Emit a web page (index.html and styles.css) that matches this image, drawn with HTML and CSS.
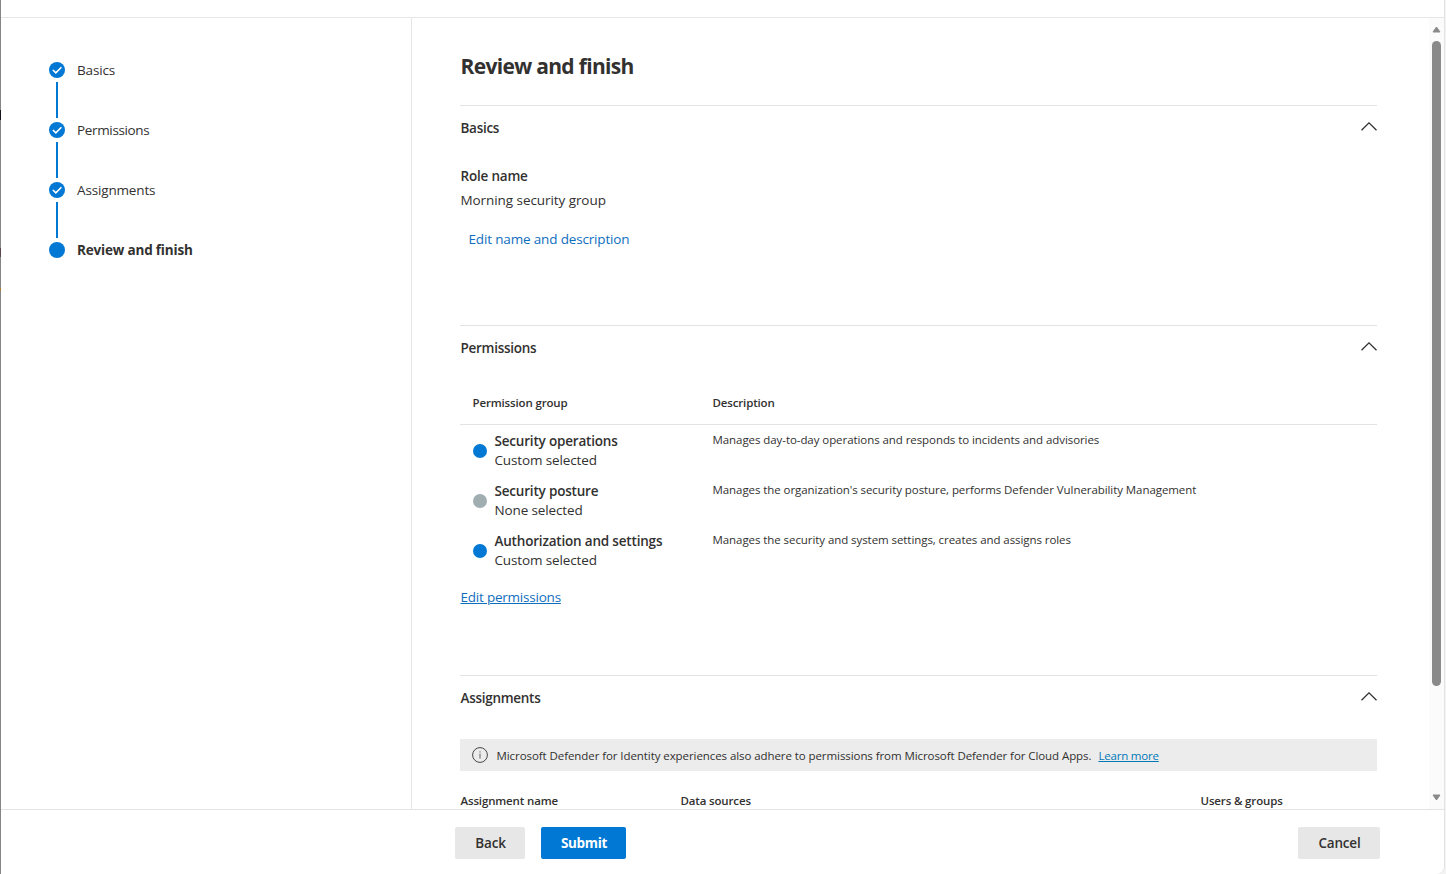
FILE: index.html
```html
<!DOCTYPE html>
<html lang="en">
<head>
<meta charset="utf-8">
<title>Review and finish</title>
<link rel="stylesheet" href="styles.css">
</head>
<body>
<div class="backdrop">
  <div class="edge"></div>
  <div class="panel">
    <header class="topbar"></header>
    <div class="body">
      <nav class="steps">
        <div class="step"><svg class="mark" viewBox="0 0 16 16"><circle cx="8" cy="8" r="8" fill="#0078d4"/><path d="M3.9 8 6.8 10.9 12.4 5.3" fill="none" stroke="#fff" stroke-width="1.6"/></svg><span>Basics</span></div>
        <div class="link-line"></div>
        <div class="step"><svg class="mark" viewBox="0 0 16 16"><circle cx="8" cy="8" r="8" fill="#0078d4"/><path d="M3.9 8 6.8 10.9 12.4 5.3" fill="none" stroke="#fff" stroke-width="1.6"/></svg><span class="narrow">Permissions</span></div>
        <div class="link-line"></div>
        <div class="step"><svg class="mark" viewBox="0 0 16 16"><circle cx="8" cy="8" r="8" fill="#0078d4"/><path d="M3.9 8 6.8 10.9 12.4 5.3" fill="none" stroke="#fff" stroke-width="1.6"/></svg><span>Assignments</span></div>
        <div class="link-line"></div>
        <div class="step current"><svg class="mark" viewBox="0 0 16 16"><circle cx="8" cy="8" r="8" fill="#0078d4"/></svg><span>Review and finish</span></div>
      </nav>
      <main class="content">
        <h1 class="title">Review and finish</h1>
        <section class="section basics">
          <div class="section-head"><h2>Basics</h2><svg class="chevron" viewBox="0 0 16 9"><path d="M.5 8.3 8 .9l7.5 7.4" fill="none" stroke="#323130" stroke-width="1.3"/></svg></div>
          <div class="field-label">Role name</div>
          <div class="field-value">Morning security group</div>
          <a class="action">Edit name and description</a>
        </section>
        <section class="section permissions">
          <div class="section-head"><h2>Permissions</h2><svg class="chevron" viewBox="0 0 16 9"><path d="M.5 8.3 8 .9l7.5 7.4" fill="none" stroke="#323130" stroke-width="1.3"/></svg></div>
          <div class="grid-head"><span>Permission group</span><span>Description</span></div>
          <div class="grid-row">
            <div class="group"><i class="dot"></i><div><b>Security operations</b><span>Custom selected</span></div></div>
            <p>Manages day-to-day operations and responds to incidents and advisories</p>
          </div>
          <div class="grid-row">
            <div class="group"><i class="dot none"></i><div><b>Security posture</b><span>None selected</span></div></div>
            <p>Manages the organization's security posture, performs Defender Vulnerability Management</p>
          </div>
          <div class="grid-row">
            <div class="group"><i class="dot"></i><div><b>Authorization and settings</b><span>Custom selected</span></div></div>
            <p>Manages the security and system settings, creates and assigns roles</p>
          </div>
          <a class="edit-link">Edit permissions</a>
        </section>
        <section class="section assignments">
          <div class="section-head"><h2>Assignments</h2><svg class="chevron" viewBox="0 0 16 9"><path d="M.5 8.3 8 .9l7.5 7.4" fill="none" stroke="#323130" stroke-width="1.3"/></svg></div>
          <div class="banner"><svg class="info" viewBox="0 0 16 16"><circle cx="8" cy="8" r="7.4" fill="none" stroke="#484644"/><path d="M8 6.6v5M8 4.3v1.2" stroke="#605e5c" fill="none"/></svg><span class="banner-text">Microsoft Defender for Identity experiences also adhere to permissions from Microsoft Defender for Cloud Apps.</span><a>Learn more</a></div>
          <div class="assign-head"><span>Assignment name</span><span>Data sources</span><span>Users &amp; groups</span></div>
        </section>
      </main>
      <div class="scrollbar">
        <svg class="arrow" viewBox="0 0 9 7"><path d="M4.5 1 8 6H1z" fill="#8a8a8a" stroke="#8a8a8a" stroke-linejoin="round"/></svg>
        <div class="thumb"></div>
        <svg class="arrow down" viewBox="0 0 9 7"><path d="M4.5 6 1 1h7z" fill="#8a8a8a" stroke="#8a8a8a" stroke-linejoin="round"/></svg>
      </div>
    </div>
    <footer class="footer">
      <button class="btn back">Back</button>
      <button class="btn primary">Submit</button>
      <button class="btn cancel">Cancel</button>
    </footer>
  </div>
</div>
</body>
</html>
```

FILE: styles.css
```css
* { box-sizing: border-box; }
body {
  margin: 0;
  overflow: hidden;
  color: #323130;
  font: 13.5px/20px "Open Sans", "Noto Sans", sans-serif;
}
.backdrop { display: flex; width: 1446px; height: 874px; background: #f3f3f3; }
.edge {
  width: 1px;
  background: linear-gradient(transparent 110px, #16141a 110px 120px, transparent 120px 248px, #5a4550 248px 257px, transparent 257px 288px, #b07a35 288px 291px, transparent 291px), #858585;
}
.panel {
  display: flex;
  flex-direction: column;
  width: 1444px;
  background: #fff;
  border-right: 1px solid #e3e3e3;
  border-bottom-right-radius: 8px;
}
.topbar { flex: none; height: 18px; border-bottom: 1px solid #e6e6e6; }
.body { display: flex; height: 791px; }
.steps { width: 411px; padding: 42px 0 0 48px; border-right: 1px solid #e6e6e6; }
.step { display: flex; align-items: center; gap: 12px; height: 20px; letter-spacing: -0.15px; }
.narrow { letter-spacing: -0.35px; }
.mark { width: 16px; height: 16px; }
.link-line { width: 2px; height: 36px; margin: 2px 0 2px 7px; background: #0078d4; }
.current { font-weight: 700; letter-spacing: -0.18px; }
.content { width: 1017px; padding: 34px 52px 0 48px; overflow: hidden; }
.title { margin: 0 0 25px; padding-left: 0.5px; font-size: 21px; line-height: 28px; font-weight: 700; letter-spacing: -0.68px; }
.section { width: 917px; border-top: 1px solid #e3e3e3; }
.basics { height: 220px; }
.permissions { height: 350px; }
.section-head { display: flex; align-items: center; justify-content: space-between; padding-top: 12px; height: 32px; }
.section-head h2 { margin: 0; padding-left: 0.5px; font-size: 13.5px; font-weight: 600; letter-spacing: -0.28px; }
.chevron { width: 16px; height: 9px; margin-bottom: 3px; }
.field-label { margin-top: 28px; padding-left: 0.5px; font-weight: 600; letter-spacing: -0.2px; }
.field-value { margin-top: 4px; padding-left: 0.5px; letter-spacing: -0.07px; }
.action { display: block; margin: 19px 0 0 8.5px; color: #106ebe; letter-spacing: -0.16px; }
.grid-head, .grid-row { display: grid; grid-template-columns: 240px 1fr; padding-left: 12.5px; }
.grid-head { margin-top: 24px; height: 43px; padding-top: 11px; border-bottom: 1px solid #e3e3e3; font-size: 11.5px; font-weight: 600; letter-spacing: -0.15px; }
.grid-row { height: 50px; padding-top: 6px; }
.grid-row p { margin: -1px 0 0; font-size: 11.5px; line-height: 19px; letter-spacing: -0.07px; white-space: nowrap; }
.group { display: flex; gap: 8px; padding-top: 1px; line-height: 19px; }
.group b, .group span { display: block; }
.group b { font-weight: 600; letter-spacing: -0.19px; }
.group span { letter-spacing: -0.13px; }
.dot { width: 14px; height: 14px; margin-top: 12px; border-radius: 50%; background: #0078d4; }
.dot.none { background: #a0aeb2; }
.edit-link { display: block; margin: 12px 0 0 0.5px; color: #106ebe; letter-spacing: -0.22px; text-decoration: underline; }
.banner { display: flex; align-items: center; height: 32px; margin-top: 31px; padding-left: 12px; background: #ececec; font-size: 11.5px; letter-spacing: -0.075px; white-space: nowrap; }
.banner-text, .banner a { padding-top: 2px; }
.info { width: 16px; height: 16px; margin-right: 8.5px; }
.banner a { margin-left: 7px; color: #0078b8; letter-spacing: -0.2px; text-decoration: underline; }
.assign-head { display: grid; grid-template-columns: 220px 520px 1fr; margin-top: 20px; padding-left: 0.5px; font-size: 11.5px; font-weight: 600; letter-spacing: -0.15px; }
.scrollbar { display: flex; flex-direction: column; align-items: center; width: 15px; padding-top: 8px; background: #fbfbfb; }
.arrow { width: 9px; height: 7px; }
.thumb { width: 9px; height: 645px; margin-top: 8px; border-radius: 5px; background: #8a8a8a; }
.down { margin-top: 108px; }
.footer { display: flex; height: 65px; padding: 17px 64px 0 454px; border-top: 1px solid #e3e3e3; }
.btn { height: 32px; border: 0; border-radius: 2px; background: #e7e7e7; color: #323130; font: 600 13.5px/20px "Open Sans", "Noto Sans", sans-serif; padding: 0 0 0 1px; letter-spacing: -0.2px; }
.back { width: 70px; }
.primary { width: 85px; margin-left: 16px; background: #0078d4; color: #fff; font-weight: 700; letter-spacing: -0.35px; }
.cancel { width: 82px; margin-left: auto; }
```
